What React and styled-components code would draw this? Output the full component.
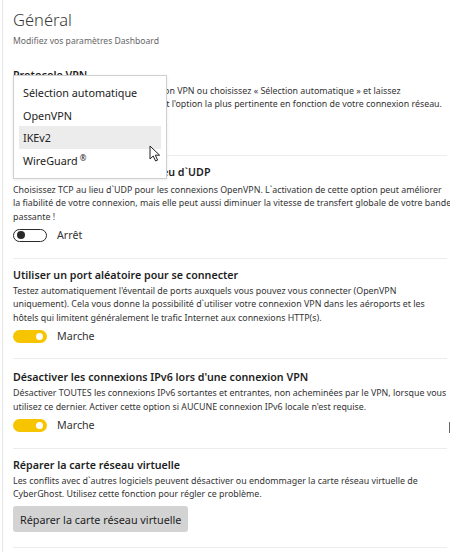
import React from 'react'
import styled, { createGlobalStyle } from 'styled-components'

const GlobalStyle = createGlobalStyle`
    html, body {
        margin: 0;
        padding: 0;
        background: #ffffff;
    }
    body {
        font-family: "Noto Sans", "Open Sans", sans-serif;
        color: #222;
    }
`

const Frame = styled.div`
    position: relative;
    width: 450px;
    height: 552px;
    overflow: hidden;
    box-sizing: border-box;
    margin-left: 2px;
    border-left: 1px solid #e6e6e6;
    padding: 8px 5px 0 10px;
`

const Title = styled.h1`
    margin: 0;
    font-size: 16.5px;
    font-weight: 300;
    line-height: 24px;
    color: #3a3a3a;
`

const Subtitle = styled.div`
    font-size: 8.6px;
    line-height: 12px;
    color: #666;
    margin-top: 3px;
`

const List = styled.div`
    display: flex;
    flex-direction: column;
    margin-top: 20px;
`

const Section = styled.section`
    position: relative;
    padding: ${p => p.$top}px 0 ${p => p.$bottom}px;
    border-bottom: 1px solid #ececec;
`

const Heading = styled.h2`
    margin: 0 0 ${p => p.$gap || 0}px;
    font-size: 10.7px;
    font-weight: 600;
    line-height: 16px;
    color: #1e1e1e;
    white-space: nowrap;
`

const Desc = styled.p`
    margin: 2px 0 0;
    font-size: 8.85px;
    line-height: 13.4px;
    color: #333;
    white-space: nowrap;
`

const ToggleRow = styled.div`
    display: flex;
    align-items: center;
    gap: 10px;
    margin-top: 3px;
    height: 16px;
`

const Track = styled.span`
    position: relative;
    box-sizing: border-box;
    width: 34px;
    height: 13px;
    border-radius: 7px;
    background: ${p => (p.$on ? '#f7c500' : '#fff')};
    border: ${p => (p.$on ? 'none' : '1.5px solid #2a2a2a')};
    display: flex;
    align-items: center;
    justify-content: ${p => (p.$on ? 'flex-end' : 'flex-start')};
    padding: 0 ${p => (p.$on ? 4 : 2.5)}px;
`

const Knob = styled.span`
    width: ${p => (p.$on ? 7 : 8)}px;
    height: ${p => (p.$on ? 7 : 8)}px;
    border-radius: 50%;
    background: ${p => (p.$on ? '#fff' : '#2a2a2a')};
`

const ToggleLabel = styled.span`
    font-size: 10.7px;
    color: #333;
`

const SelectBox = styled.div`
    margin-top: 4px;
    width: 154px;
    height: 25px;
    border: 1px solid #c8c8c8;
    box-sizing: border-box;
`

const Dropdown = styled.div`
    position: absolute;
    left: 0;
    top: 8px;
    width: 154px;
    box-sizing: border-box;
    background: #fff;
    border: 1px solid #cfcfcf;
    box-shadow: 0 1px 3px rgba(0, 0, 0, 0.08);
    padding: 5px 5px 6px;
    display: flex;
    flex-direction: column;
    z-index: 2;
`

const Option = styled.div`
    height: 22.7px;
    display: flex;
    align-items: center;
    padding-left: 4px;
    font-size: 10.8px;
    color: #222;
    background: ${p => (p.$hover ? '#ececec' : 'transparent')};
`

const Sup = styled.span`
    font-size: 8px;
    margin-left: 2px;
    position: relative;
    top: -3px;
`

const Button = styled.button`
    display: block;
    margin-top: 4.5px;
    height: 26px;
    padding: 0 7px;
    border: none;
    border-radius: 3px;
    background: #d3d3d3;
    font-family: inherit;
    font-size: 10.8px;
    color: #1e1e1e;
`

const Cursor = styled.svg`
    position: absolute;
    left: 146px;
    top: 145px;
    z-index: 3;
`

const ScrollMark = styled.span`
    position: absolute;
    right: 1px;
    top: 422px;
    width: 2px;
    height: 11px;
    background: #666;
`

function Toggle({ on }) {
    return (
        <ToggleRow>
            <Track $on={on}>
                <Knob $on={on} />
            </Track>
            <ToggleLabel>{on ? 'Marche' : 'Arrêt'}</ToggleLabel>
        </ToggleRow>
    )
}

const options = ['Sélection automatique', 'OpenVPN', 'IKEv2', 'WireGuard']

export default function App() {
    return (
        <Frame>
            <GlobalStyle />
            <Title>Général</Title>
            <Subtitle>Modifiez vos paramètres Dashboard</Subtitle>

            <List>
                <Section $top={0} $bottom={14}>
                    <Heading>Protocole VPN</Heading>
                    <Desc>
                        Sélectionnez le protocole de connexion VPN ou choisissez « Sélection automatique » et laissez<br />
                        CyberGhost choisir automatiquement l'option la plus pertinente en fonction de votre connexion réseau.
                    </Desc>
                    <SelectBox />
                    <Dropdown>
                        {options.map(o => (
                            <Option key={o} $hover={o === 'IKEv2'}>
                                {o}
                                {o === 'WireGuard' && <Sup>®</Sup>}
                            </Option>
                        ))}
                    </Dropdown>
                </Section>

                <Section $top={8} $bottom={15}>
                    <Heading $gap={4}>Utiliser le protocole TCP au lieu d`UDP</Heading>
                    <Desc>
                        Choisissez TCP au lieu d`UDP pour les connexions OpenVPN. L`activation de cette option peut améliorer<br />
                        la fiabilité de votre connexion, mais elle peut aussi diminuer la vitesse de transfert globale de votre bande<br />
                        passante !
                    </Desc>
                    <Toggle on={false} />
                </Section>

                <Section $top={8} $bottom={14}>
                    <Heading>Utiliser un port aléatoire pour se connecter</Heading>
                    <Desc>
                        Testez automatiquement l'éventail de ports auxquels vous pouvez vous connecter (OpenVPN<br />
                        uniquement). Cela vous donne la possibilité d`utiliser votre connexion VPN dans les aéroports et les<br />
                        hôtels qui limitent généralement le trafic Internet aux connexions HTTP(s).
                    </Desc>
                    <Toggle on />
                </Section>

                <Section $top={10} $bottom={15}>
                    <Heading>Désactiver les connexions IPv6 lors d'une connexion VPN</Heading>
                    <Desc>
                        Désactiver TOUTES les connexions IPv6 sortantes et entrantes, non acheminées par le VPN, lorsque vous<br />
                        utilisez ce dernier. Activer cette option si AUCUNE connexion IPv6 locale n'est requise.
                    </Desc>
                    <Toggle on />
                </Section>

                <Section $top={8} $bottom={15}>
                    <Heading>Réparer la carte réseau virtuelle</Heading>
                    <Desc>
                        Les conflits avec d`autres logiciels peuvent désactiver ou endommager la carte réseau virtuelle de<br />
                        CyberGhost. Utilisez cette fonction pour régler ce problème.
                    </Desc>
                    <Button>Réparer la carte réseau virtuelle</Button>
                </Section>
            </List>

            <Cursor width="12" height="17" viewBox="0 0 12 17">
                <path d="M1 1 L1 14 L4.2 11 L6.6 16 L8.6 15.1 L6.3 10.2 L10.6 10.2 Z" fill="#fff" stroke="#222" strokeWidth="1" strokeLinejoin="round" />
            </Cursor>
            <ScrollMark />
        </Frame>
    )
}
